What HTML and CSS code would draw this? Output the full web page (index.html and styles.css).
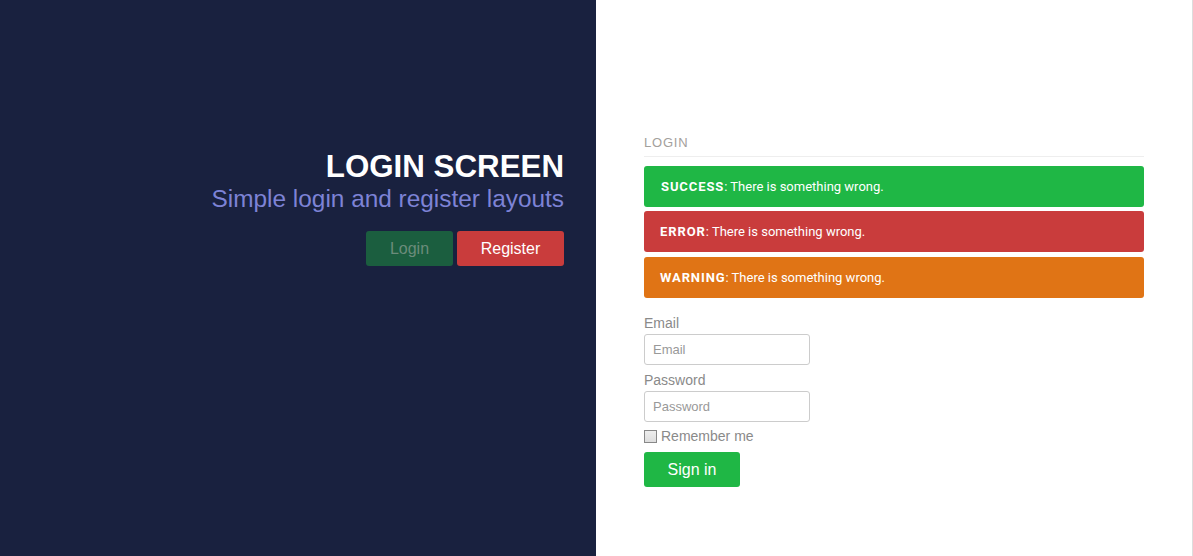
FILE: index.html
```html
<!DOCTYPE html>
<html>
<head>
<meta charset="utf-8">
<link rel="stylesheet" href="styles.css">
</head>
<body>
<div class="page">
  <section class="brand">
    <h1 class="brand-title">LOGIN SCREEN</h1>
    <p class="brand-sub">Simple login and register layouts</p>
    <div class="brand-actions">
      <button class="btn btn-login">Login</button>
      <button class="btn btn-register">Register</button>
    </div>
  </section>
  <section class="panel">
    <div class="panel-inner">
      <h2 class="panel-title">LOGIN</h2>
      <div class="alerts">
        <div class="alert alert-success"><b>SUCCESS</b>: There is something wrong.</div>
        <div class="alert alert-error"><b>ERROR</b>: There is something wrong.</div>
        <div class="alert alert-warning"><b>WARNING</b>: There is something wrong.</div>
      </div>
      <form class="form">
        <label class="label" for="email">Email</label>
        <input class="input" id="email" type="text" placeholder="Email">
        <label class="label label-pw" for="pw">Password</label>
        <input class="input" id="pw" type="password" placeholder="Password">
        <label class="check"><span class="box"></span>Remember me</label>
        <button type="button" class="btn btn-signin">Sign in</button>
      </form>
    </div>
  </section>
</div>
</body>
</html>
```
FILE: styles.css
```css
* { box-sizing: border-box; }
html, body { margin: 0; padding: 0; }
body {
  font-family: "Liberation Sans", Arial, sans-serif;
  background: #fff;
}
.page {
  display: flex;
  height: 556px;
  width: 1193px;
}
.brand {
  width: 596px;
  background: #19213f;
  text-align: right;
  padding: 150px 32px 0 0;
}
.brand-title {
  margin: 0;
  color: #fff;
  font-size: 31.3px;
  font-weight: bold;
  line-height: 34px;
}
.brand-sub {
  margin: 0;
  color: #7d83d6;
  font-size: 24.4px;
  line-height: 30px;
}
.brand-actions {
  display: flex;
  justify-content: flex-end;
  gap: 4px;
  margin-top: 17px;
}
.btn {
  border: 0;
  border-radius: 3px;
  font-family: "Liberation Sans", Arial, sans-serif;
  font-size: 16px;
  height: 35px;
  cursor: pointer;
}
.btn-login {
  width: 87px;
  background: #1b5e3f;
  color: #6b8c7b;
}
.btn-register {
  width: 107px;
  background: #c93c3c;
  color: #fff;
}
.panel {
  flex: 1;
  padding: 135px 0 0 48px;
  border-right: 1px solid #ddd;
}
.panel-inner { width: 500px; }
.panel-title {
  margin: 0;
  font-size: 13px;
  font-weight: normal;
  color: #a3a09c;
  letter-spacing: 0.8px;
  line-height: 16px;
  padding-bottom: 5px;
  border-bottom: 1px solid #eee;
}
.alerts {
  display: flex;
  flex-direction: column;
  gap: 4px;
  margin-top: 9px;
}
.alert {
  height: 41px;
  border-radius: 3px;
  color: #fff;
  font-family: Roboto, "Liberation Sans", sans-serif;
  font-size: 13px;
  padding: 0 16px;
  display: flex;
  align-items: center;
}
.alert b { font-weight: bold; letter-spacing: 0.9px; }
.alert-success { background: #1fb745; padding-left: 17px; }
.alert-error { background: #c93c3c; margin-bottom: 1px; }
.alert-warning { background: #e07415; }
.form {
  display: flex;
  flex-direction: column;
  align-items: flex-start;
  margin-top: 17px;
}
.label {
  font-size: 14px;
  color: #8a8a8a;
  line-height: 17px;
}
.label-pw { margin-top: 7px; }
.input {
  width: 166px;
  height: 31px;
  margin-top: 2px;
  border: 1px solid #ccc;
  border-radius: 3px;
  padding: 0 8px;
  font-family: "Liberation Sans", Arial, sans-serif;
  font-size: 13px;
  color: #555;
}
.input::placeholder { color: #999; }
.check {
  display: flex;
  align-items: center;
  font-size: 14px;
  color: #8a8a8a;
  margin-top: 6px;
  line-height: 17px;
}
.box {
  width: 13px;
  height: 13px;
  border: 1px solid #888;
  background: linear-gradient(#eee, #ddd);
  margin-right: 4px;
}
.btn-signin {
  margin-top: 7px;
  width: 96px;
  background: #1fb745;
  color: #fff;
}
```
